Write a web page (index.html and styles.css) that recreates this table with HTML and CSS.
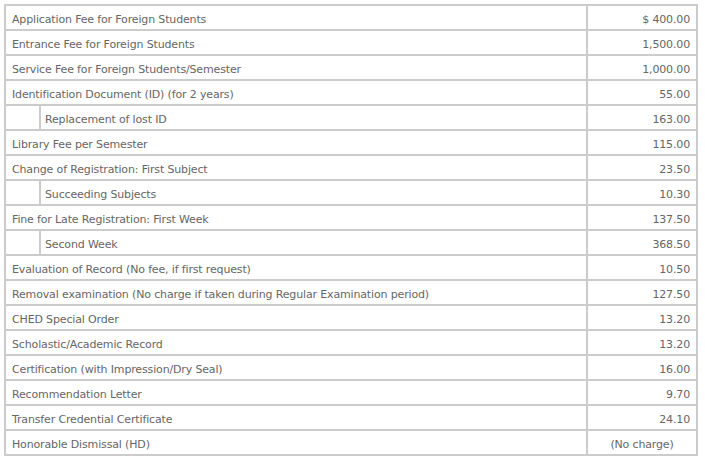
FILE: index.html
```html
<!DOCTYPE html>
<html>
<head>
<meta charset="utf-8">
<link rel="stylesheet" href="styles.css">
</head>
<body>
<table class="fees">
  <colgroup>
    <col class="c-indent">
    <col class="c-label">
    <col class="c-amount">
  </colgroup>
  <tbody>
    <tr><td colspan="2">Application Fee for Foreign Students</td><td class="amt">$ 400.00</td></tr>
    <tr><td colspan="2">Entrance Fee for Foreign Students</td><td class="amt">1,500.00</td></tr>
    <tr><td colspan="2">Service Fee for Foreign Students/Semester</td><td class="amt">1,000.00</td></tr>
    <tr><td colspan="2">Identification Document (ID) (for 2 years)</td><td class="amt">55.00</td></tr>
    <tr><td class="indent"></td><td class="sub">Replacement of lost ID</td><td class="amt">163.00</td></tr>
    <tr><td colspan="2">Library Fee per Semester</td><td class="amt">115.00</td></tr>
    <tr><td colspan="2">Change of Registration: First Subject</td><td class="amt">23.50</td></tr>
    <tr><td class="indent"></td><td class="sub">Succeeding Subjects</td><td class="amt">10.30</td></tr>
    <tr><td colspan="2">Fine for Late Registration: First Week</td><td class="amt">137.50</td></tr>
    <tr><td class="indent"></td><td class="sub">Second Week</td><td class="amt">368.50</td></tr>
    <tr><td colspan="2">Evaluation of Record (No fee, if first request)</td><td class="amt">10.50</td></tr>
    <tr><td colspan="2">Removal examination (No charge if taken during Regular Examination period)</td><td class="amt">127.50</td></tr>
    <tr><td colspan="2">CHED Special Order</td><td class="amt">13.20</td></tr>
    <tr><td colspan="2">Scholastic/Academic Record</td><td class="amt">13.20</td></tr>
    <tr><td colspan="2">Certification (with Impression/Dry Seal)</td><td class="amt">16.00</td></tr>
    <tr><td colspan="2">Recommendation Letter</td><td class="amt">9.70</td></tr>
    <tr><td colspan="2">Transfer Credential Certificate</td><td class="amt">24.10</td></tr>
    <tr><td colspan="2">Honorable Dismissal (HD)</td><td class="amt center">(No charge)</td></tr>
  </tbody>
</table>
</body>
</html>
```
FILE: styles.css
```css
html, body {
  margin: 0;
  padding: 0;
  background: #fff;
}
body {
  padding: 4px 0 0 4px;
  font-family: "DejaVu Sans", Verdana, sans-serif;
  font-size: 11px;
  letter-spacing: -0.15px;
  color: #666;
}
.fees {
  width: 694px;
  table-layout: fixed;
  border-collapse: separate;
  border-spacing: 0;
  border: 1px solid #ccc;
}
.c-indent { width: 35px; }
.c-amount { width: 110px; }
.fees td {
  height: 19px;
  padding: 4px 6px 0 6px;
  border: 1px solid #ccc;
  box-sizing: content-box;
  line-height: 14px;
  vertical-align: middle;
  white-space: nowrap;
}
.fees td.indent {
  padding: 0;
}
.fees td.sub {
  padding-left: 4px;
}
.fees td.amt {
  text-align: right;
  padding-right: 6px;
}
.fees td.amt.center {
  text-align: center;
}
```
